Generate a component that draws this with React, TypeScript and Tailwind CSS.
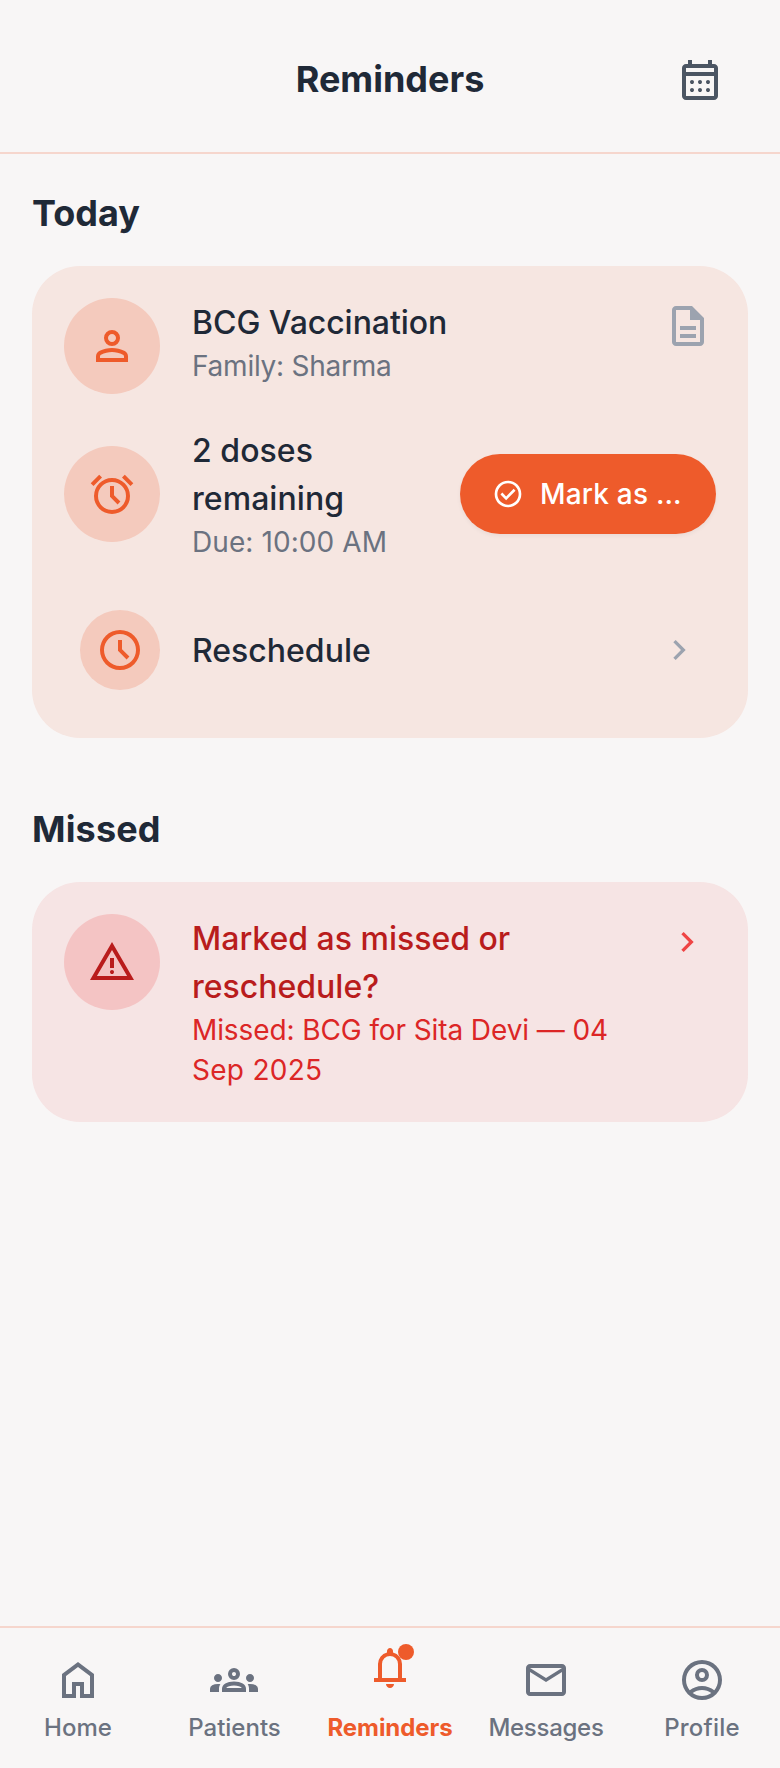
import type { ReactNode } from "react";

const ICONS = {
  calendar:
    "M200-80q-33 0-56.5-23.5T120-160v-560q0-33 23.5-56.5T200-800h40v-80h80v80h320v-80h80v80h40q33 0 56.5 23.5T840-720v560q0 33-23.5 56.5T760-80H200Zm0-80h560v-400H200v400Zm0-480h560v-80H200v80Zm280 240q-17 0-28.5-11.5T440-440q0-17 11.5-28.5T480-480q17 0 28.5 11.5T520-440q0 17-11.5 28.5T480-400Zm-160 0q-17 0-28.5-11.5T280-440q0-17 11.5-28.5T320-480q17 0 28.5 11.5T360-440q0 17-11.5 28.5T320-400Zm320 0q-17 0-28.5-11.5T600-440q0-17 11.5-28.5T640-480q17 0 28.5 11.5T680-440q0 17-11.5 28.5T640-400ZM480-240q-17 0-28.5-11.5T440-280q0-17 11.5-28.5T480-320q17 0 28.5 11.5T520-280q0 17-11.5 28.5T480-240Zm-160 0q-17 0-28.5-11.5T280-280q0-17 11.5-28.5T320-320q17 0 28.5 11.5T360-280q0 17-11.5 28.5T320-240Zm320 0q-17 0-28.5-11.5T600-280q0-17 11.5-28.5T640-320q17 0 28.5 11.5T680-280q0 17-11.5 28.5T640-240Z",
  person:
    "M480-480q-66 0-113-47t-47-113q0-66 47-113t113-47q66 0 113 47t47 113q0 66-47 113t-113 47ZM160-160v-112q0-34 17.5-62.5T224-378q62-31 126-46.5T480-440q66 0 130 15.5T736-378q29 15 46.5 43.5T800-272v112H160Zm80-80h480v-32q0-11-5.5-20T700-306q-54-27-109-40.5T480-360q-56 0-111 13.5T260-306q-9 5-14.5 14t-5.5 20v32Zm240-320q33 0 56.5-23.5T560-640q0-33-23.5-56.5T480-720q-33 0-56.5 23.5T400-640q0 33 23.5 56.5T480-560Z",
  description:
    "M320-240h320v-80H320v80Zm0-160h320v-80H320v80ZM240-80q-33 0-56.5-23.5T160-160v-640q0-33 23.5-56.5T240-880h320l240 240v480q0 33-23.5 56.5T720-80H240Zm280-520v-200H240v640h480v-440H520Z",
  alarm:
    "M480-80q-75 0-140.5-28.5t-114-77q-48.5-48.5-77-114T120-440q0-75 28.5-140.5t77-114q48.5-48.5 114-77T480-800q75 0 140.5 28.5t114 77q48.5 48.5 77 114T840-440q0 75-28.5 140.5t-77 114q-48.5 48.5-114 77T480-80Zm112-192 56-56-128-128v-184h-80v216l152 152ZM224-866l56 56-170 170-56-56 170-170Zm512 0 170 170-56 56-170-170 56-56ZM480-160q117 0 198.5-81.5T760-440q0-117-81.5-198.5T480-720q-117 0-198.5 81.5T200-440q0 117 81.5 198.5T480-160Z",
  schedule:
    "m612-292 56-56-148-148v-184h-80v216l172 172ZM480-80q-83 0-156-31.5T197-197q-54-54-85.5-127T80-480q0-83 31.5-156T197-763q54-54 127-85.5T480-880q83 0 156 31.5T763-763q54 54 85.5 127T880-480q0 83-31.5 156T763-197q-54 54-127 85.5T480-80Zm0-80q133 0 226.5-93.5T800-480q0-133-93.5-226.5T480-800q-133 0-226.5 93.5T160-480q0 133 93.5 226.5T480-160Z",
  check:
    "m424-296 282-282-56-56-226 226-114-114-56 56 170 170Zm56 216q-83 0-156-31.5T197-197q-54-54-85.5-127T80-480q0-83 31.5-156T197-763q54-54 127-85.5T480-880q83 0 156 31.5T763-763q54 54 85.5 127T880-480q0 83-31.5 156T763-197q-54 54-127 85.5T480-80Zm0-80q134 0 227-93t93-227q0-134-93-227t-227-93q-134 0-227 93t-93 227q0 134 93 227t227 93Z",
  chevron: "M504-480 320-664l56-56 240 240-240 240-56-56 184-184Z",
  warning:
    "m40-120 440-760 440 760H40Zm138-80h604L480-720 178-200Zm302-40q17 0 28.5-11.5T520-280q0-17-11.5-28.5T480-320q-17 0-28.5 11.5T440-280q0 17 11.5 28.5T480-240Zm-40-120h80v-200h-80v200Z",
  home: "M240-200h120v-240h240v240h120v-360L480-740 240-560v360Zm-80 80v-480l320-240 320 240v480H520v-240h-80v240H160Z",
  groups:
    "M0-240v-63q0-43 44-70t116-27q13 0 25 .5t23 2.5q-14 21-21 44t-7 48v65H0Zm240 0v-65q0-32 17.5-58.5T307-410q32-20 76.5-30t96.5-10q53 0 97.5 10t76.5 30q32 20 49 46.5t17 58.5v65H240Zm540 0v-65q0-26-6.5-49T754-397q11-2 22.5-2.5t23.5-.5q72 0 116 26.5t44 70.5v63H780Zm-455-80h311q-10-20-55.5-35T480-370q-55 0-100.5 15T325-320ZM160-440q-33 0-56.5-23.5T80-520q0-34 23.5-57t56.5-23q34 0 57 23t23 57q0 33-23 56.5T160-440Zm640 0q-33 0-56.5-23.5T720-520q0-34 23.5-57t56.5-23q34 0 57 23t23 57q0 33-23 56.5T800-440Zm-320-40q-50 0-85-35t-35-85q0-51 35-85.5t85-34.5q51 0 85.5 34.5T600-600q0 50-34.5 85T480-480Zm0-80q17 0 28.5-11.5T520-600q0-17-11.5-28.5T480-640q-17 0-28.5 11.5T440-600q0 17 11.5 28.5T480-560Z",
  bell: "M160-200v-80h80v-280q0-83 50-147.5T420-792v-28q0-25 17.5-42.5T480-880q25 0 42.5 17.5T540-820v28q80 20 130 84.5T720-560v280h80v80H160Zm320 120q-33 0-56.5-23.5T400-160h160q0 33-23.5 56.5T480-80ZM320-280h320v-280q0-66-47-113t-113-47q-66 0-113 47t-47 113v280Z",
  mail: "M160-160q-33 0-56.5-23.5T80-240v-480q0-33 23.5-56.5T160-800h640q33 0 56.5 23.5T880-720v480q0 33-23.5 56.5T800-160H160Zm320-280L160-640v400h640v-400L480-440Zm0-80 320-200H160l320 200Z",
  account:
    "M234-276q51-39 114-61.5T480-360q69 0 132 22.5T726-276q35-41 54.5-93T800-480q0-133-93.5-226.5T480-800q-133 0-226.5 93.5T160-480q0 59 19.5 111t54.5 93Zm246-164q-59 0-99.5-40.5T340-580q0-59 40.5-99.5T480-720q59 0 99.5 40.5T620-580q0 59-40.5 99.5T480-440Zm0 360q-83 0-156-31.5T197-197q-54-54-85.5-127T80-480q0-83 31.5-156T197-763q54-54 127-85.5T480-880q83 0 156 31.5T763-763q54 54 85.5 127T880-480q0 83-31.5 156T763-197q-54 54-127 85.5T480-80Zm0-80q53 0 100-15.5t86-44.5q-39-29-86-44.5T480-280q-53 0-100 15.5T294-220q39 29 86 44.5T480-160Zm0-360q26 0 43-17t17-43q0-26-17-43t-43-17q-26 0-43 17t-17 43q0 26 17 43t43 17Z",
};

type IconName = keyof typeof ICONS;

function Icon({ name, className = "size-12" }: { name: IconName; className?: string }) {
  return (
    <svg viewBox="0 -960 960 960" fill="currentColor" className={`shrink-0 ${className}`} aria-hidden="true">
      <path d={ICONS[name]} />
    </svg>
  );
}

function Bubble({ className, children }: { className: string; children: ReactNode }) {
  return <div className={`flex shrink-0 items-center justify-center rounded-full ${className}`}>{children}</div>;
}

function SectionTitle({ children }: { children: ReactNode }) {
  return <h2 className="mb-[26px] text-[36px] leading-[54px] font-bold">{children}</h2>;
}

function ItemTitle({ className = "", children }: { className?: string; children: ReactNode }) {
  return <p className={`-mb-px pt-px text-[32px] leading-12 font-medium ${className}`}>{children}</p>;
}

function NavItem({ icon, label, className = "" }: { icon: IconName; label: string; className?: string }) {
  return (
    <a className="flex flex-col items-center justify-end gap-2 text-[#6b7280]">
      <Icon name={icon} />
      <span className={`text-2xl leading-8 font-medium ${className}`}>{label}</span>
    </a>
  );
}

export default function App() {
  return (
    <div className="flex h-[1768px] w-[780px] flex-col bg-[#f8f6f6] font-['Inter',sans-serif] text-[#1f2937]">
      <header className="flex h-[154px] shrink-0 items-center border-b-2 border-[#ee5b2b]/20 px-10 pt-2">
        <div className="w-20" />
        <h1 className="flex-1 pb-0.5 text-center text-[36px] leading-[56px] font-bold">Reminders</h1>
        <button className="flex size-20 items-center justify-center text-[#4b5563]">
          <Icon name="calendar" />
        </button>
      </header>

      <main className="flex flex-1 flex-col gap-16 px-8 pt-8">
        <section>
          <SectionTitle>Today</SectionTitle>
          <div className="flex flex-col gap-8 rounded-[48px] bg-[#ee5b2b]/10 p-8">
            <div className="flex items-start gap-8">
              <Bubble className="size-24 bg-[#ee5b2b]/20 text-[#ee5b2b]">
                <Icon name="person" />
              </Bubble>
              <div className="flex-1">
                <ItemTitle className="tracking-[-0.05px]">BCG Vaccination</ItemTitle>
                <p className="text-[28px] leading-10 tracking-[-0.24px] text-[#6b7280]">Family: Sharma</p>
              </div>
              <button className="p-1 text-[#9ca3af]">
                <Icon name="description" />
              </button>
            </div>

            <div className="flex items-center gap-8">
              <Bubble className="size-24 bg-[#ee5b2b]/20 text-[#ee5b2b]">
                <Icon name="alarm" />
              </Bubble>
              <div className="flex-1">
                <ItemTitle className="tracking-[0.05px]">
                  2 doses
                  <br />
                  remaining
                </ItemTitle>
                <p className="text-[28px] leading-10 tracking-[0.08px] text-[#6b7280]">Due: 10:00 AM</p>
              </div>
              <button className="flex h-20 w-64 items-center gap-4 rounded-full bg-[#ee5b2b] px-8 text-white shadow-[0_2px_4px_0_rgba(0,0,0,0.05)]">
                <Icon name="check" className="size-8" />
                <span className="text-[28px] leading-10 font-medium tracking-[0.2px] whitespace-nowrap">Mark as …</span>
              </button>
            </div>

            <div className="flex items-center gap-8 p-4">
              <Bubble className="size-20 bg-[#ee5b2b]/20 text-[#ee5b2b]">
                <Icon name="schedule" />
              </Bubble>
              <ItemTitle className="flex-1">Reschedule</ItemTitle>
              <Icon name="chevron" className="size-10 text-[#9ca3af]" />
            </div>
          </div>
        </section>

        <section>
          <SectionTitle>
            <span className="tracking-[0.15px]">Missed</span>
          </SectionTitle>
          <div className="flex items-start gap-8 rounded-[48px] bg-[#ef4444]/10 p-8">
            <Bubble className="size-24 bg-[#ef4444]/20 text-[#b91c1c]">
              <Icon name="warning" />
            </Bubble>
            <div className="flex-1">
              <ItemTitle className="text-[#b91c1c]">
                Marked as missed or
                <br />
                reschedule?
              </ItemTitle>
              <p className="text-[28px] leading-10 text-[#dc2626]">
                <span className="tracking-[-0.1px]">Missed: BCG for Sita Devi — 04</span>
                <br />
                <span className="tracking-[0.28px]">Sep 2025</span>
              </p>
            </div>
            <button className="p-2 text-[#ef4444]">
              <Icon name="chevron" className="size-10" />
            </button>
          </div>
        </section>
      </main>

      <nav className="grid h-[142px] shrink-0 grid-cols-5 border-t-2 border-[#ee5b2b]/20 pb-6">
        <NavItem icon="home" label="Home" />
        <NavItem icon="groups" label="Patients" className="pl-px" />
        <a className="flex flex-col items-center justify-end gap-5 text-[#ee5b2b]">
          <span className="relative">
            <Icon name="bell" />
            <span className="absolute top-0 right-0 size-4 rounded-full bg-[#ee5b2b]" />
          </span>
          <span className="text-2xl leading-8 font-bold tracking-[-0.08px]">Reminders</span>
        </a>
        <NavItem icon="mail" label="Messages" className="tracking-[-0.28px]" />
        <NavItem icon="account" label="Profile" className="tracking-[0.2px]" />
      </nav>
    </div>
  );
}
